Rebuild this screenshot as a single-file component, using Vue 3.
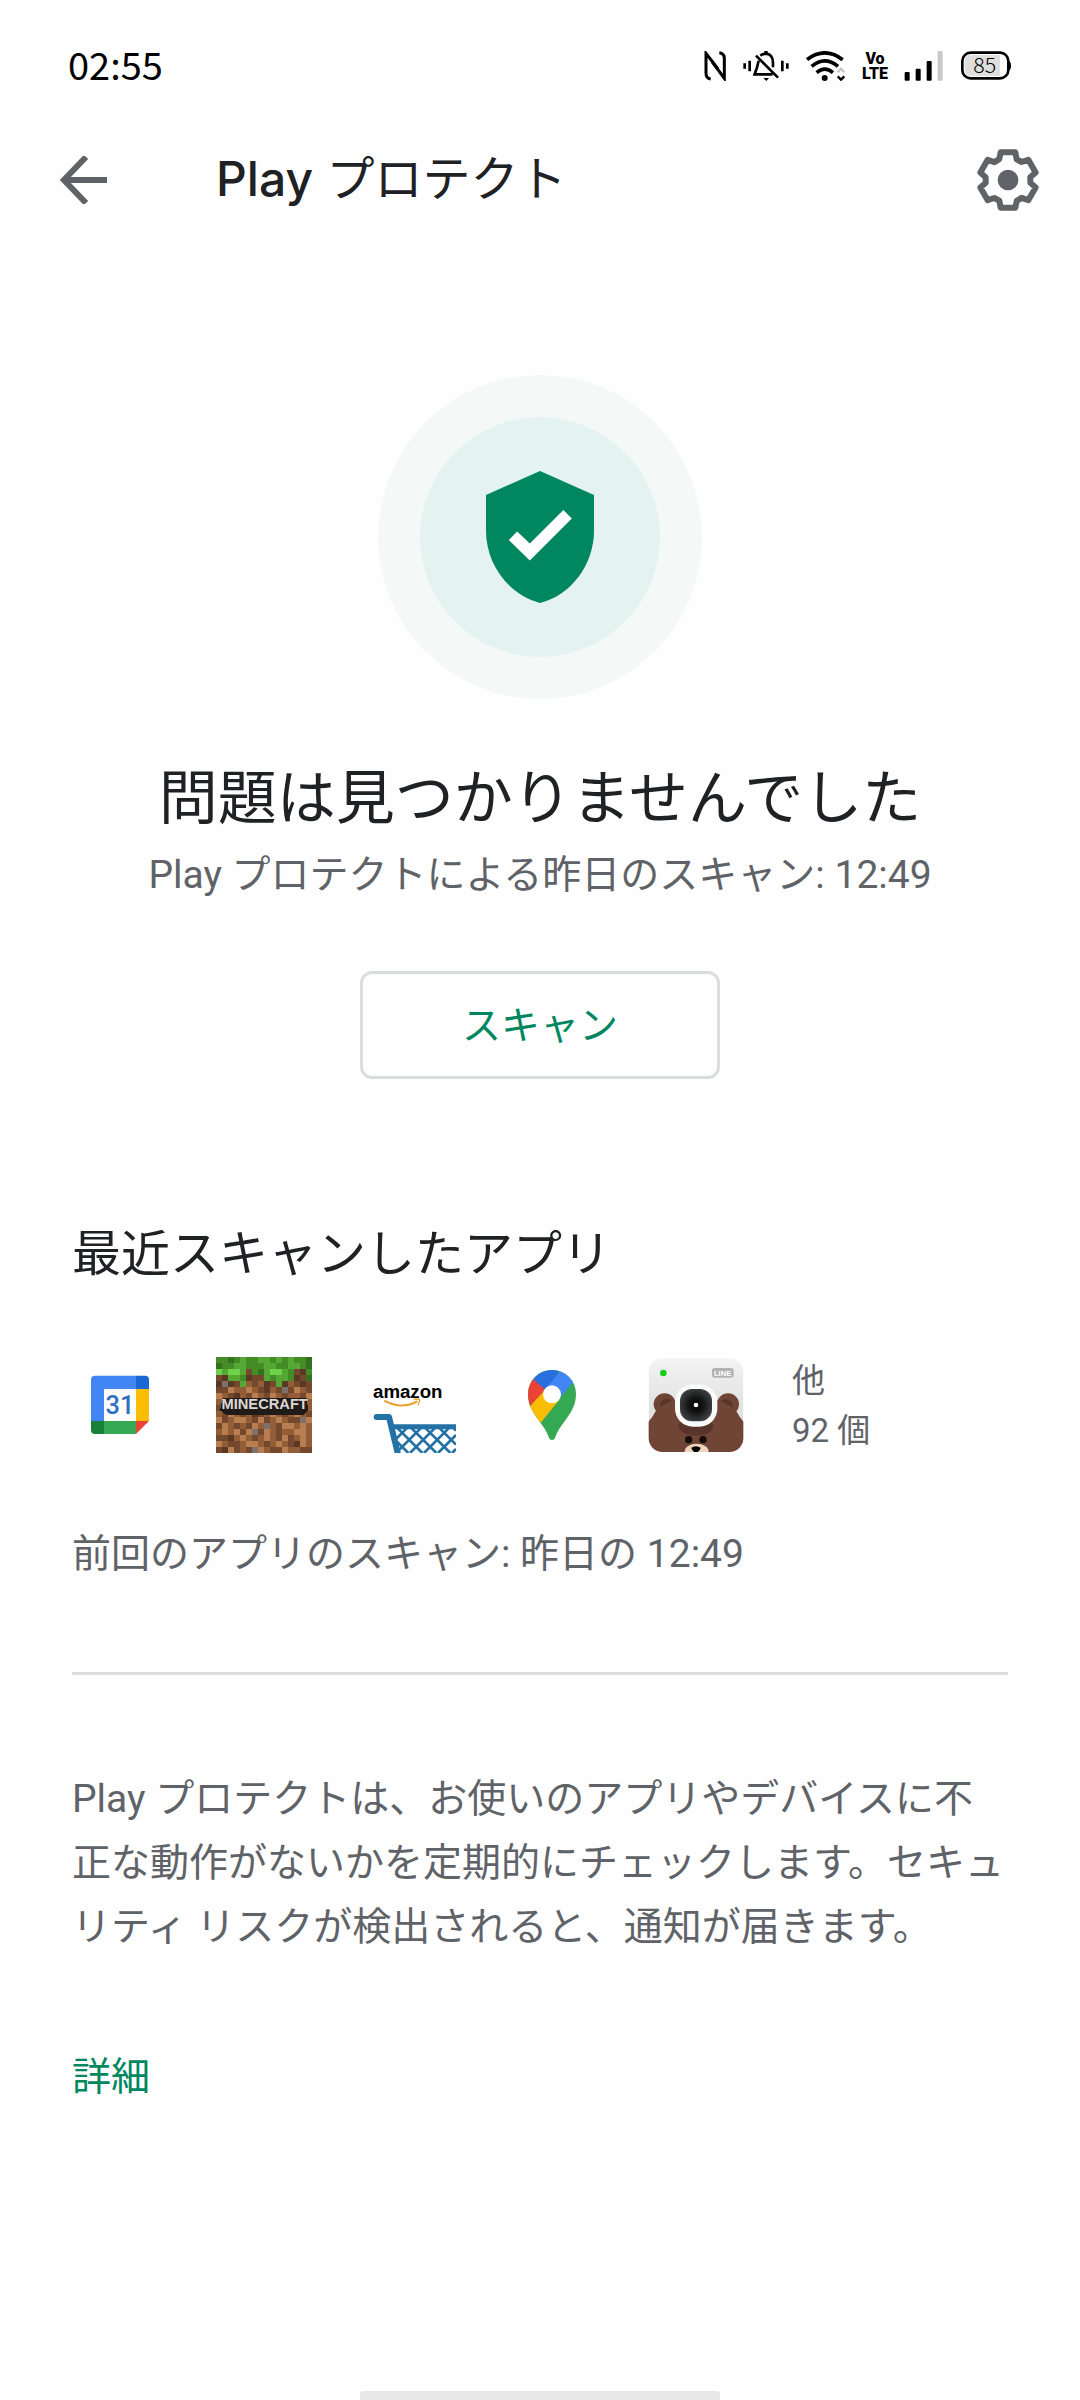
<template>
  <div class="page">

    <!-- ステータスバー -->
    <div class="status-bar">
      <time class="clock">02:55</time>

      <div class="status-icons">
        <svg width="22" height="30" viewBox="70 65 66 90" fill="none" stroke="#000" stroke-width="9">
          <path d="M90 149 Q76 147 76 132 V72 L112 119" />
          <path d="M116 70 Q131 72 131 87 V147 L95 98" />
        </svg>

        <svg width="46" height="30" viewBox="187 63 138 90" fill="none" stroke="#000" stroke-width="8">
          <path d="M192 100v16M207 92v32M305 92v32M320 100v16" />
          <path d="M239 77 Q247 71 257 71 Q277 74 277 98 V112" />
          <path d="M234 92 Q230 112 222 133 H276" />
          <path d="M226 77 L292 143" />
          <path d="M256 63v8" stroke-width="10" />
          <path d="M248 144h17l-8 9z" fill="#000" stroke="none" />
        </svg>

        <svg width="40" height="30" viewBox="385 62 120 90" fill="none" stroke="#000" stroke-width="11">
          <path d="M388 88 Q441 47 495 88" />
          <path d="M402 108 Q441 75 481 108" />
          <path d="M417 127 Q441 106 466 127" />
          <circle cx="441" cy="143" r="9" fill="#000" stroke="none" />
          <path d="M480 126l10-11 10 11" stroke="#c8c8c8" stroke-width="7" />
          <path d="M480 138l10 10 10-10" stroke-width="7" />
        </svg>

        <span class="volte"><span>Vo</span><span>LTE</span></span>

        <svg width="40" height="30" viewBox="670 63 120 90">
          <rect x="672" y="126" width="15" height="26" rx="3" />
          <rect x="705" y="116" width="15" height="36" rx="3" />
          <rect x="738" y="93" width="15" height="59" rx="3" />
          <rect x="771" y="63" width="15" height="89" rx="3" fill="#c9c9c9" />
        </svg>

        <svg class="battery" width="50" height="30" viewBox="843 64 150 90">
          <rect x="847" y="69" width="138" height="77" rx="25" fill="#fff" stroke="#000" stroke-width="8" />
          <path d="M874 76H960V139H874Q854 139 854 119V96Q854 76 874 76z" fill="#dedede" />
          <path d="M984 94q9 0 9 14t-9 14z" />
          <text x="914" y="130" text-anchor="middle" class="battery-text">85</text>
        </svg>
      </div>
    </div>

    <!-- ヘッダー -->
    <header class="app-bar">
      <button class="icon-button" aria-label="戻る">
        <svg width="48" height="48" viewBox="0 0 48 48" fill="none" stroke="#5f6368" stroke-width="6">
          <path d="M47 24H6M26 1 4 24 26 47" />
        </svg>
      </button>
      <h1 class="title"><span class="brand">Play</span> プロテクト</h1>
      <button class="icon-button" aria-label="設定">
        <svg width="64" height="64" viewBox="-96 -96 192 192">
          <polygon :points="gearPoints" fill="none" stroke="#5f6368" stroke-width="18" stroke-linejoin="round" />
          <circle r="31" fill="#5f6368" />
        </svg>
      </button>
    </header>

    <main>
      <section class="hero">
        <div class="halo">
          <div class="halo-inner">
            <svg width="144" height="144" viewBox="0 0 24 24">
              <path fill="#01875f" d="M12 1 3 5v6c0 5.55 3.84 10.74 9 12 5.16-1.26 9-6.45 9-12V5z" />
              <path fill="#fff" d="M6.8 12.5 8.2 11.1 10.3 13.1 15.9 7.5 17.3 8.9 10.3 15.9z" />
            </svg>
          </div>
        </div>
        <h2 class="result">問題は見つかりませんでした</h2>
        <p class="text">Play プロテクトによる昨日のスキャン: 12:49</p>
        <button class="scan-button">スキャン</button>
      </section>

      <section class="recent">
        <h2 class="section-title">最近スキャンしたアプリ</h2>

        <div class="apps">
          <!-- カレンダー -->
          <svg class="app-icon" viewBox="36 78 288 288">
            <path d="M105 134H228V174H132V270H93V146Q93 134 105 134z" fill="#4285f4" />
            <path d="M228 134H255Q267 134 267 146V174H228z" fill="#1967d2" />
            <path d="M228 174h39v96h-39z" fill="#fbbc04" />
            <path d="M132 270h96v39h-96z" fill="#34a853" />
            <path d="M93 270H132V309H105Q93 309 93 297z" fill="#188038" />
            <path d="M228 270h39l-39 39z" fill="#ea4335" />
            <text x="180" y="249" text-anchor="middle" class="cal-text">31</text>
          </svg>

          <!-- マインクラフト -->
          <svg class="app-icon" viewBox="0 0 288 288" shape-rendering="crispEdges">
            <rect
              v-for="b in blocks"
              :key="b.key"
              :x="b.x"
              :y="b.y"
              width="18"
              height="18"
              :fill="b.color"
            />
            <path d="M18 130H20V122H272V130L278 160 262 173H30L12 160z" fill="#201a18" />
            <text x="146" y="156" text-anchor="middle" class="mine-text">MINECRAFT</text>
          </svg>

          <!-- ショッピング -->
          <svg class="app-icon" viewBox="60 78 288 288">
            <text x="99" y="202" class="amazon-text">amazon</text>
            <path d="M133 209Q184 237 232 211" fill="none" stroke="#e8a02c" stroke-width="6" />
            <path d="M221 206q15-4 18 0q1 7-5 17" fill="none" stroke="#e8a02c" stroke-width="4" />
            <g fill="none" stroke="#2272a6">
              <path d="M110 258H147L174 370" stroke-width="18" stroke-linecap="round" stroke-linejoin="round" />
              <path d="M156 287H348" stroke-width="15" />
              <path
                d="M165 327 205 287M168 366 247 287M210 366 289 287M252 366 331 287M294 366 348 312M336 366 348 354M247 366 168 287M289 366 210 287M331 366 252 287M348 341 294 287M348 299 336 287M205 366 170 331"
                stroke-width="8"
              />
            </g>
          </svg>

          <!-- マップ -->
          <svg class="app-icon" viewBox="492 78 288 288">
            <clipPath id="pin">
              <path d="M564 189a72 72 0 0 1 144 0c0 36-17 58-33 80-14 19-24 32-30 52q-2 6-9 6t-9-6c-6-20-16-33-30-52-16-22-33-44-33-80z" />
            </clipPath>
            <g clip-path="url(#pin)">
              <path d="M560 110h150v220H560z" fill="#34a853" />
              <path d="M560 238 612 176 657 208 604 273 560 290z" fill="#fbbc04" />
              <path d="M560 130 581 144 618 174 566 229 550 240z" fill="#ea4335" />
              <path d="M578 143 570 100H672L620 180z" fill="#2a6fe0" />
              <path d="M668 113 720 110V130L656 204 614 177z" fill="#4285f4" />
            </g>
            <circle cx="636" cy="190" r="27" fill="#fff" />
          </svg>

          <!-- カメラ -->
          <svg class="app-icon" viewBox="84 78 288 288">
            <defs>
              <linearGradient id="body" x1="0" y1="0" x2="0" y2="1">
                <stop offset="0" stop-color="#f3f3f3" />
                <stop offset="0.5" stop-color="#e2e2e2" />
              </linearGradient>
              <radialGradient id="lens">
                <stop offset="0" stop-color="#000" />
                <stop offset="0.5" stop-color="#161616" />
                <stop offset="1" stop-color="#3a3c3d" />
              </radialGradient>
              <clipPath id="cam">
                <rect x="86" y="82" width="284" height="281" rx="42" />
              </clipPath>
            </defs>
            <g clip-path="url(#cam)">
              <rect x="86" y="82" width="284" height="281" fill="url(#body)" />
              <circle cx="134" cy="220" r="33" fill="#704535" />
              <circle cx="324" cy="220" r="33" fill="#704535" />
              <circle cx="140" cy="224" r="20" fill="#59342a" />
              <circle cx="318" cy="224" r="20" fill="#59342a" />
              <path d="M76 380V282Q96 262 106 242 140 202 228 202T350 242Q360 262 380 282V380z" fill="#704535" />
              <ellipse cx="228" cy="286" rx="52" ry="28" fill="#59342a" />
              <ellipse cx="230" cy="362" rx="36" ry="24" fill="#f0d3bd" />
              <path d="M214 350q14-9 28 0-2 12-14 15-12-3-14-15z" />
            </g>
            <circle cx="206" cy="326" r="11" fill="#140c0a" />
            <circle cx="249" cy="326" r="11" fill="#140c0a" />
            <rect x="165" y="160" width="127" height="127" rx="54" fill="#fafafa" />
            <rect x="180" y="174" width="96" height="97" rx="36" fill="url(#lens)" />
            <circle cx="228" cy="222" r="7" fill="#fff" />
            <circle cx="130" cy="126" r="10" fill="#18cf18" />
            <rect x="276" y="111" width="65" height="29" rx="8" fill="#b3b3b3" />
            <text x="308" y="134" text-anchor="middle" class="line-text">LINE</text>
          </svg>

          <p class="more">他<br />92 個</p>
        </div>

        <p class="text">前回のアプリのスキャン: 昨日の 12:49</p>
      </section>

      <hr class="divider" />

      <section class="about">
        <p class="text">
          Play プロテクトは、お使いのアプリやデバイスに不正な動作がないかを定期的にチェックします。セキュリティ リスクが検出されると、通知が届きます。
        </p>
        <a href="#" class="details">詳細</a>
      </section>
    </main>

    <div class="home-bar"></div>
  </div>
</template>

<script setup>
// 歯車の歯ひとつ分を60度ずつ回転
const tooth = [[-22, -83], [22, -83], [26, -62], [41, -54]];

const gearPoints = Array.from({ length: 6 }, (_, i) => {
  const a = (i * Math.PI) / 3;
  return tooth
    .map(([x, y]) => [
      x * Math.cos(a) - y * Math.sin(a),
      x * Math.sin(a) + y * Math.cos(a),
    ])
    .map((p) => p.map((v) => v.toFixed(1)).join(","))
    .join(" ");
}).join(" ");

// 土と草のブロック
const colors = {
  d: "#35701f",
  G: "#438c26",
  g: "#55a834",
  l: "#6fd04a",
  k: "#5a3823",
  B: "#74482c",
  b: "#935d38",
  o: "#b87e50",
  s: "#7c716d",
};

const rows = [
  "GGdGgGGggGgGgGGd",
  "dGGggGGGggGGggGd",
  "lgllgBGdgllgGBkG",
  "BkggGkBBgGggGkBd",
  "kskBgbBbkBgkbBkB",
  "BBobbobBkbBsBobB",
  "obBkbBobBobBbbBo",
  "bobBobkboBoobBob",
  "BbkobBbobBbkobBb",
  "bBobBbkBbobBbobB",
  "oBboobBoBbobBBso",
  "BobBbBobsbBoobob",
  "boboBosBobBbboob",
  "BBkbobBbobBoBbob",
  "obBBboobBbobBkob",
  "BkoBbBsobBBobbBB",
];

const blocks = rows.flatMap((row, y) =>
  [...row].map((c, x) => ({
    key: `${x}-${y}`,
    x: x * 18,
    y: y * 18,
    color: colors[c],
  }))
);
</script>

<style>
body {
  margin: 0;
  background: #fefefe;
}
</style>

<style scoped>
* {
  box-sizing: border-box;
}

.page {
  min-height: 100vh;
  display: flex;
  flex-direction: column;
  background: #fefefe;
  color: #202124;
  font-family: Roboto, "Noto Sans CJK JP", sans-serif;
}

h1,
h2,
p {
  margin: 0;
  font-weight: 400;
}

button {
  padding: 0;
  border: none;
  background: none;
  font-family: inherit;
  cursor: pointer;
}

svg {
  display: block;
  flex-shrink: 0;
}

/* ステータスバー */

.status-bar {
  height: 132px;
  padding: 0 69px 0 68px;
  display: flex;
  align-items: center;
  justify-content: space-between;
  color: #000;
}

.clock {
  padding-bottom: 4px;
  font-family: "Noto Sans CJK JP", sans-serif;
  font-size: 38px;
  line-height: 48px;
}

.status-icons {
  display: flex;
  align-items: center;
  gap: 17px;
}

.volte {
  width: 24px;
  display: flex;
  flex-direction: column;
  align-items: center;
  font-size: 16px;
  font-weight: 900;
  line-height: 15px;
}

.battery {
  overflow: visible;
}

.battery-text {
  font-family: "Noto Sans CJK JP", sans-serif;
  font-size: 64px;
  font-weight: 300;
}

/* ヘッダー */

.app-bar {
  height: 96px;
  padding: 0 40px 0 60px;
  display: flex;
  align-items: center;
}

.icon-button {
  display: flex;
}

.title {
  flex: 1;
  margin-left: 108px;
  padding-bottom: 2px;
  font-family: Inter, "Noto Sans CJK JP", sans-serif;
  font-size: 48px;
  line-height: 64px;
}

.brand {
  font-weight: 500;
}

/* スキャン結果 */

.hero {
  padding: 147px 72px 0;
  display: flex;
  flex-direction: column;
  align-items: center;
}

.halo {
  width: 324px;
  height: 324px;
  display: flex;
  align-items: center;
  justify-content: center;
  border-radius: 50%;
  background: #f4f9f8;
}

.halo-inner {
  width: 240px;
  height: 240px;
  display: flex;
  align-items: center;
  justify-content: center;
  border-radius: 50%;
  background: #e5f3f0;
}

.result {
  margin-top: 60px;
  font-size: 59px;
  line-height: 80px;
}

.text {
  color: #5f6368;
  font-size: 39px;
  line-height: 64px;
}

.hero .text {
  margin-top: 4px;
}

.scan-button {
  width: 360px;
  height: 108px;
  margin-top: 64px;
  padding-bottom: 6px;
  border: 3px solid #dadce0;
  border-radius: 12px;
  color: #01875f;
  font-size: 39px;
}

/* 最近スキャンしたアプリ */

.recent {
  padding: 144px 72px 86px;
}

.section-title {
  font-size: 49px;
  line-height: 64px;
}

.apps {
  margin: 67px 0 66px;
  display: flex;
  align-items: center;
  gap: 48px;
}

.app-icon {
  width: 96px;
  height: 96px;
}

.cal-text {
  font-family: Roboto, sans-serif;
  font-size: 76px;
  font-weight: 500;
  fill: #2f6fc4;
}

.mine-text {
  font-family: "Liberation Sans", sans-serif;
  font-size: 44px;
  font-weight: 700;
  fill: #dcd8d6;
}

.amazon-text {
  font-family: "Liberation Sans", sans-serif;
  font-size: 56px;
  font-weight: 700;
}

.line-text {
  font-family: "Liberation Sans", sans-serif;
  font-size: 23px;
  font-weight: 700;
  fill: #fff;
}

.more {
  padding-top: 2px;
  color: #5f6368;
  font-size: 33px;
  line-height: 50px;
}

.divider {
  height: 3px;
  margin: 0 72px;
  border: none;
  background: #dcdcdc;
}

/* 説明 */

.about {
  padding: 92px 72px 0;
}

.details {
  display: inline-block;
  margin-top: 86px;
  color: #01875f;
  font-size: 39px;
  line-height: 64px;
  text-decoration: none;
}

.home-bar {
  width: 360px;
  height: 9px;
  margin: auto auto 0;
  border-radius: 4px 4px 0 0;
  background: #e8e8e8;
}
</style>
